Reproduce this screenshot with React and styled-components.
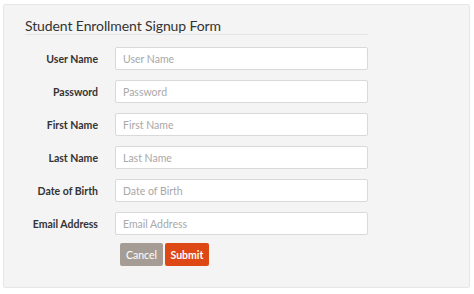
import React from 'react'
import styled, { createGlobalStyle } from 'styled-components'

const GlobalStyle = createGlobalStyle`
  body {
    margin: 0;
    background: #ffffff;
    font-family: Lato, "Open Sans", sans-serif;
  }
`

const Panel = styled.div`
  margin: 4px 4px 6px 3px;
  height: 284px;
  box-sizing: border-box;
  background: #f4f4f4;
  border: 1px solid #e6e6e6;
  border-radius: 2px;
  padding: 13px 0 0 21px;
`

const Title = styled.h2`
  width: 343px;
  margin: 0;
  border-bottom: 1px solid #e4e4e4;
  font-size: 14px;
  line-height: 16px;
  letter-spacing: -0.1px;
  font-weight: 400;
  color: #333333;
`

const Form = styled.form`
  display: grid;
  grid-template-columns: 73px 253px;
  column-gap: 17px;
  row-gap: 10px;
  align-items: center;
  margin-top: 12px;
`

const Label = styled.label`
  text-align: right;
  white-space: nowrap;
  font-size: 10.5px;
  font-weight: 700;
  color: #333333;
`

const Input = styled.input`
  box-sizing: border-box;
  height: 23px;
  width: 100%;
  padding: 0 7px;
  border: 1px solid #d9d9d9;
  border-radius: 2px;
  background: #ffffff;
  font-family: inherit;
  font-size: 10.5px;
  color: #333333;
  outline: none;

  &::placeholder {
    color: #a8a8a8;
  }
`

const Actions = styled.div`
  grid-column: 2;
  display: flex;
  gap: 2px;
  padding-left: 5px;
  margin-top: -2px;
`

const Button = styled.button`
  height: 23px;
  padding: 0;
  width: ${(p) => p.$w}px;
  border: none;
  border-radius: 2px;
  background: ${(p) => p.$bg};
  color: #ffffff;
  font-family: inherit;
  font-size: 10.5px;
  font-weight: ${(p) => (p.$bold ? 700 : 400)};
`

const fields = [
  'User Name',
  'Password',
  'First Name',
  'Last Name',
  'Date of Birth',
  'Email Address',
]

export default function App() {
  return (
    <>
      <GlobalStyle />
      <Panel>
        <Title>Student Enrollment Signup Form</Title>
        <Form onSubmit={(e) => e.preventDefault()}>
          {fields.map((f) => (
            <React.Fragment key={f}>
              <Label>{f}</Label>
              <Input
                type={f === 'Password' ? 'password' : 'text'}
                placeholder={f}
              />
            </React.Fragment>
          ))}
          <Actions>
            <Button type="button" $w={43} $bg="#a59d95">
              Cancel
            </Button>
            <Button type="submit" $w={44} $bg="#dd4814" $bold>
              Submit
            </Button>
          </Actions>
        </Form>
      </Panel>
    </>
  )
}
